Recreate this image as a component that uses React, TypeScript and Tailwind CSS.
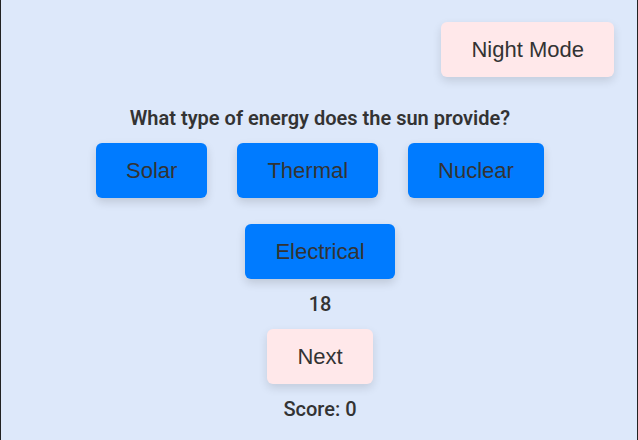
import { useState } from "react";

const options = ["Solar", "Thermal", "Nuclear", "Electrical"];

export default function App() {
  const [score] = useState(0);
  const [timeLeft] = useState(18);

  return (
    <div
      className="min-h-[440px] bg-[#dde8fa] border-x border-[#222] pt-[22px] text-[#333]"
      style={{ fontFamily: "Roboto, 'Liberation Sans', sans-serif" }}
    >
      <div className="flex justify-end pr-[23px]">
        <button className="h-[55px] rounded-md bg-[#ffe8ea] px-[30px] text-[22px] text-[#333] shadow-[0_4px_10px_rgba(0,0,0,0.12)] font-['Liberation_Sans',Arial,sans-serif]">
          Night Mode
        </button>
      </div>

      <div className="pl-[2px]">
        <h2 className="mt-[29px] text-center text-[20px] font-semibold leading-[24px]">
          What type of energy does the sun provide?
        </h2>

        <div className="mx-auto mt-[13px] flex max-w-[500px] flex-wrap justify-center gap-x-[30px] gap-y-[26px]">
          {options.map((opt) => (
            <button
              key={opt}
              className="h-[55px] rounded-md bg-[#007bff] px-[30px] text-[22px] text-[#333] shadow-[0_4px_10px_rgba(0,0,0,0.14)] font-['Liberation_Sans',Arial,sans-serif]"
            >
              {opt}
            </button>
          ))}
        </div>

        <div className="mt-[13px] text-center text-[20px] font-medium leading-[24px]">{timeLeft}</div>

        <div className="mt-[13px] flex justify-center">
          <button className="h-[55px] rounded-md bg-[#ffe8ea] px-[30px] text-[22px] text-[#333] shadow-[0_4px_10px_rgba(0,0,0,0.12)] font-['Liberation_Sans',Arial,sans-serif]">
            Next
          </button>
        </div>

        <div className="mt-[13px] text-center text-[20px] font-medium leading-[24px]">Score: {score}</div>
      </div>
    </div>
  );
}
